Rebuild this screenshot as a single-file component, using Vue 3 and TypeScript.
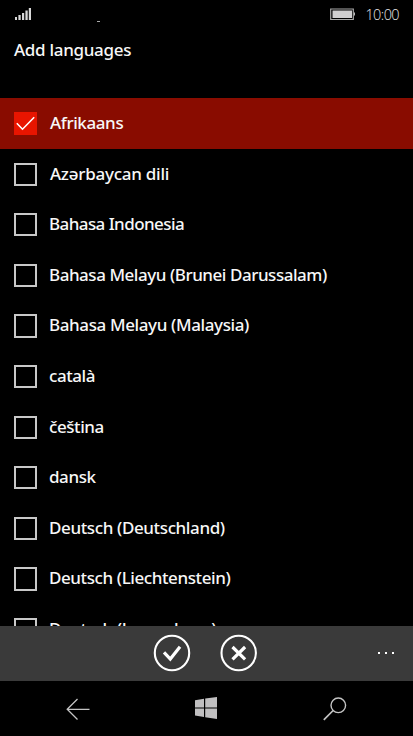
<script setup lang="ts">
interface Language {
  name: string
  tracking: number
  selected?: boolean
}

const languages: Language[] = [
  { name: 'Afrikaans', tracking: -0.4, selected: true },
  { name: 'Azərbaycan dili', tracking: -0.25 },
  { name: 'Bahasa Indonesia', tracking: -0.57 },
  { name: 'Bahasa Melayu (Brunei Darussalam)', tracking: -0.46 },
  { name: 'Bahasa Melayu (Malaysia)', tracking: -0.38 },
  { name: 'català', tracking: -0.42 },
  { name: 'čeština', tracking: -0.42 },
  { name: 'dansk', tracking: -0.42 },
  { name: 'Deutsch (Deutschland)', tracking: -0.38 },
  { name: 'Deutsch (Liechtenstein)', tracking: -0.41 },
  { name: 'Deutsch (Luxemburg)', tracking: -0.41 },
]
</script>

<template>
  <main class="phone">
    <header class="status">
      <svg class="signal" width="17" height="14" viewBox="0 0 17 14" fill="#d8d8d8">
        <path d="M0 10h2v3H0zM3.4 8h2.3v5H3.4zM7 6h2.2v7H7zM10.4 3.4h2.3V13h-2.3z" />
        <path d="M13.8 1H16v12h-2.2z" />
      </svg>
      <i class="speck"></i>
      <svg class="battery" width="26" height="13" viewBox="0 0 26 13">
        <path d="M.7 1h22.6v10.5H.7z" fill="none" stroke="#a8a8a8" stroke-width="1.2" />
        <path d="M2.5 2.5h19.5v7.5H2.5z" fill="#d0cfd0" />
        <path d="M24 4.5h1v3h-1z" fill="#bbb" />
      </svg>
      <time class="clock">10:00</time>
    </header>
    <h1 class="title">Add languages</h1>
    <ul class="list">
      <li v-for="lang in languages" :key="lang.name" class="row" :class="{ selected: lang.selected }">
        <span class="box">
          <svg v-if="lang.selected" width="23" height="23" viewBox="0 0 23 23">
            <path d="M2.8 11.3l5.7 5.9L20.2 5.3" fill="none" stroke="#fff" stroke-width="1.6" />
          </svg>
        </span>
        <span class="name" :style="{ letterSpacing: lang.tracking + 'px' }">{{ lang.name }}</span>
      </li>
    </ul>
    <footer class="appbar">
      <svg class="action" width="38" height="38" viewBox="0 0 38 38" fill="none" stroke="#fff">
        <circle cx="19" cy="19" r="17.2" stroke-width="2.1" />
        <path d="M11 18.3l6.3 6.7L27 12.7" stroke-width="3.2" />
      </svg>
      <svg class="action" width="38" height="38" viewBox="0 0 38 38" fill="none" stroke="#fff">
        <circle cx="18.7" cy="19" r="17.2" stroke-width="2.1" />
        <path d="M12.5 13l12.6 12.4M25.1 13L12.5 25.4" stroke-width="3.2" />
      </svg>
      <span class="more"><i></i><i></i><i></i></span>
    </footer>
    <nav class="nav">
      <svg width="24" height="24" viewBox="0 0 24 24" fill="none" stroke="#c4c4c4" stroke-width="1.3">
        <path d="M23.5 12.3H1.5M11.5 2L1.2 12.3l10.3 10.2" />
      </svg>
      <svg width="24" height="24" viewBox="0 0 24 24" fill="#c0bfc0">
        <path d="M0 3.2l9-1.4v8.6H0zM10.2 1.6L22 0v10.4H10.2zM0 11.6h9v8.3l-9-1.3zM10.2 11.6H22V22l-11.8-1.8z" />
      </svg>
      <svg width="24" height="24" viewBox="0 0 24 24" fill="none" stroke="#c4c4c4" stroke-width="1.4">
        <circle cx="15.3" cy="8.3" r="7.3" />
        <path d="M10.1 13.5L.8 22.8" stroke-width="1.7" />
      </svg>
    </nav>
  </main>
</template>

<style>
body {
  background: #000;
}
</style>

<style scoped>
.phone {
  width: 413px;
  height: 736px;
  overflow: hidden;
  display: flex;
  flex-direction: column;
  background: #000;
  color: #f7f7f7;
  font-family: 'Noto Sans', 'Open Sans', sans-serif;
}
svg {
  display: block;
  flex: none;
}
.status {
  height: 28px;
  box-sizing: border-box;
  flex: none;
  display: flex;
  align-items: flex-start;
  padding: 7px 14px 0 15px;
}
.speck {
  width: 3px;
  height: 1px;
  margin: 14px 0 0 65px;
  background: #aaa;
}
.battery {
  margin: 1px 9.5px 0 auto;
}
.clock {
  font: 300 14.5px/15px 'Open Sans', sans-serif;
  letter-spacing: -0.6px;
  color: #e8e8e8;
}
.title {
  flex: none;
  height: 70.3px;
  margin: 0;
  padding-left: 14px;
  box-sizing: border-box;
  font-size: 17px;
  line-height: 43px;
  font-weight: 500;
  letter-spacing: -0.3px;
}
.list {
  flex: 1;
  min-height: 0;
  overflow: hidden;
  margin: 0;
  padding: 0;
  list-style: none;
}
.row {
  height: 50.6px;
  box-sizing: border-box;
  display: flex;
  align-items: center;
  gap: 12.2px;
  padding-left: 13.5px;
}
.selected {
  background: #890c00;
}
.box {
  width: 23.3px;
  height: 23.3px;
  box-sizing: border-box;
  border: 2px solid #c8c8c8;
}
.selected .box {
  border: 0;
  background: #e81500;
}
.name {
  font-size: 17px;
  font-weight: 500;
  line-height: 24px;
  padding-bottom: 1px;
  white-space: nowrap;
}
.row:nth-child(-n + 2) .name {
  padding-left: 1px;
}
.appbar {
  height: 55.5px;
  flex: none;
  box-sizing: border-box;
  background: #3a3a3a;
  display: flex;
  align-items: center;
  gap: 28.5px;
  padding: 0 19px 0 153px;
}
.more {
  display: flex;
  gap: 5px;
  margin-left: auto;
}
.more i {
  width: 2px;
  height: 2px;
  background: #fff;
}
.nav {
  height: 55px;
  flex: none;
  display: flex;
  align-items: center;
  justify-content: space-between;
  padding: 0 66px;
}
</style>
